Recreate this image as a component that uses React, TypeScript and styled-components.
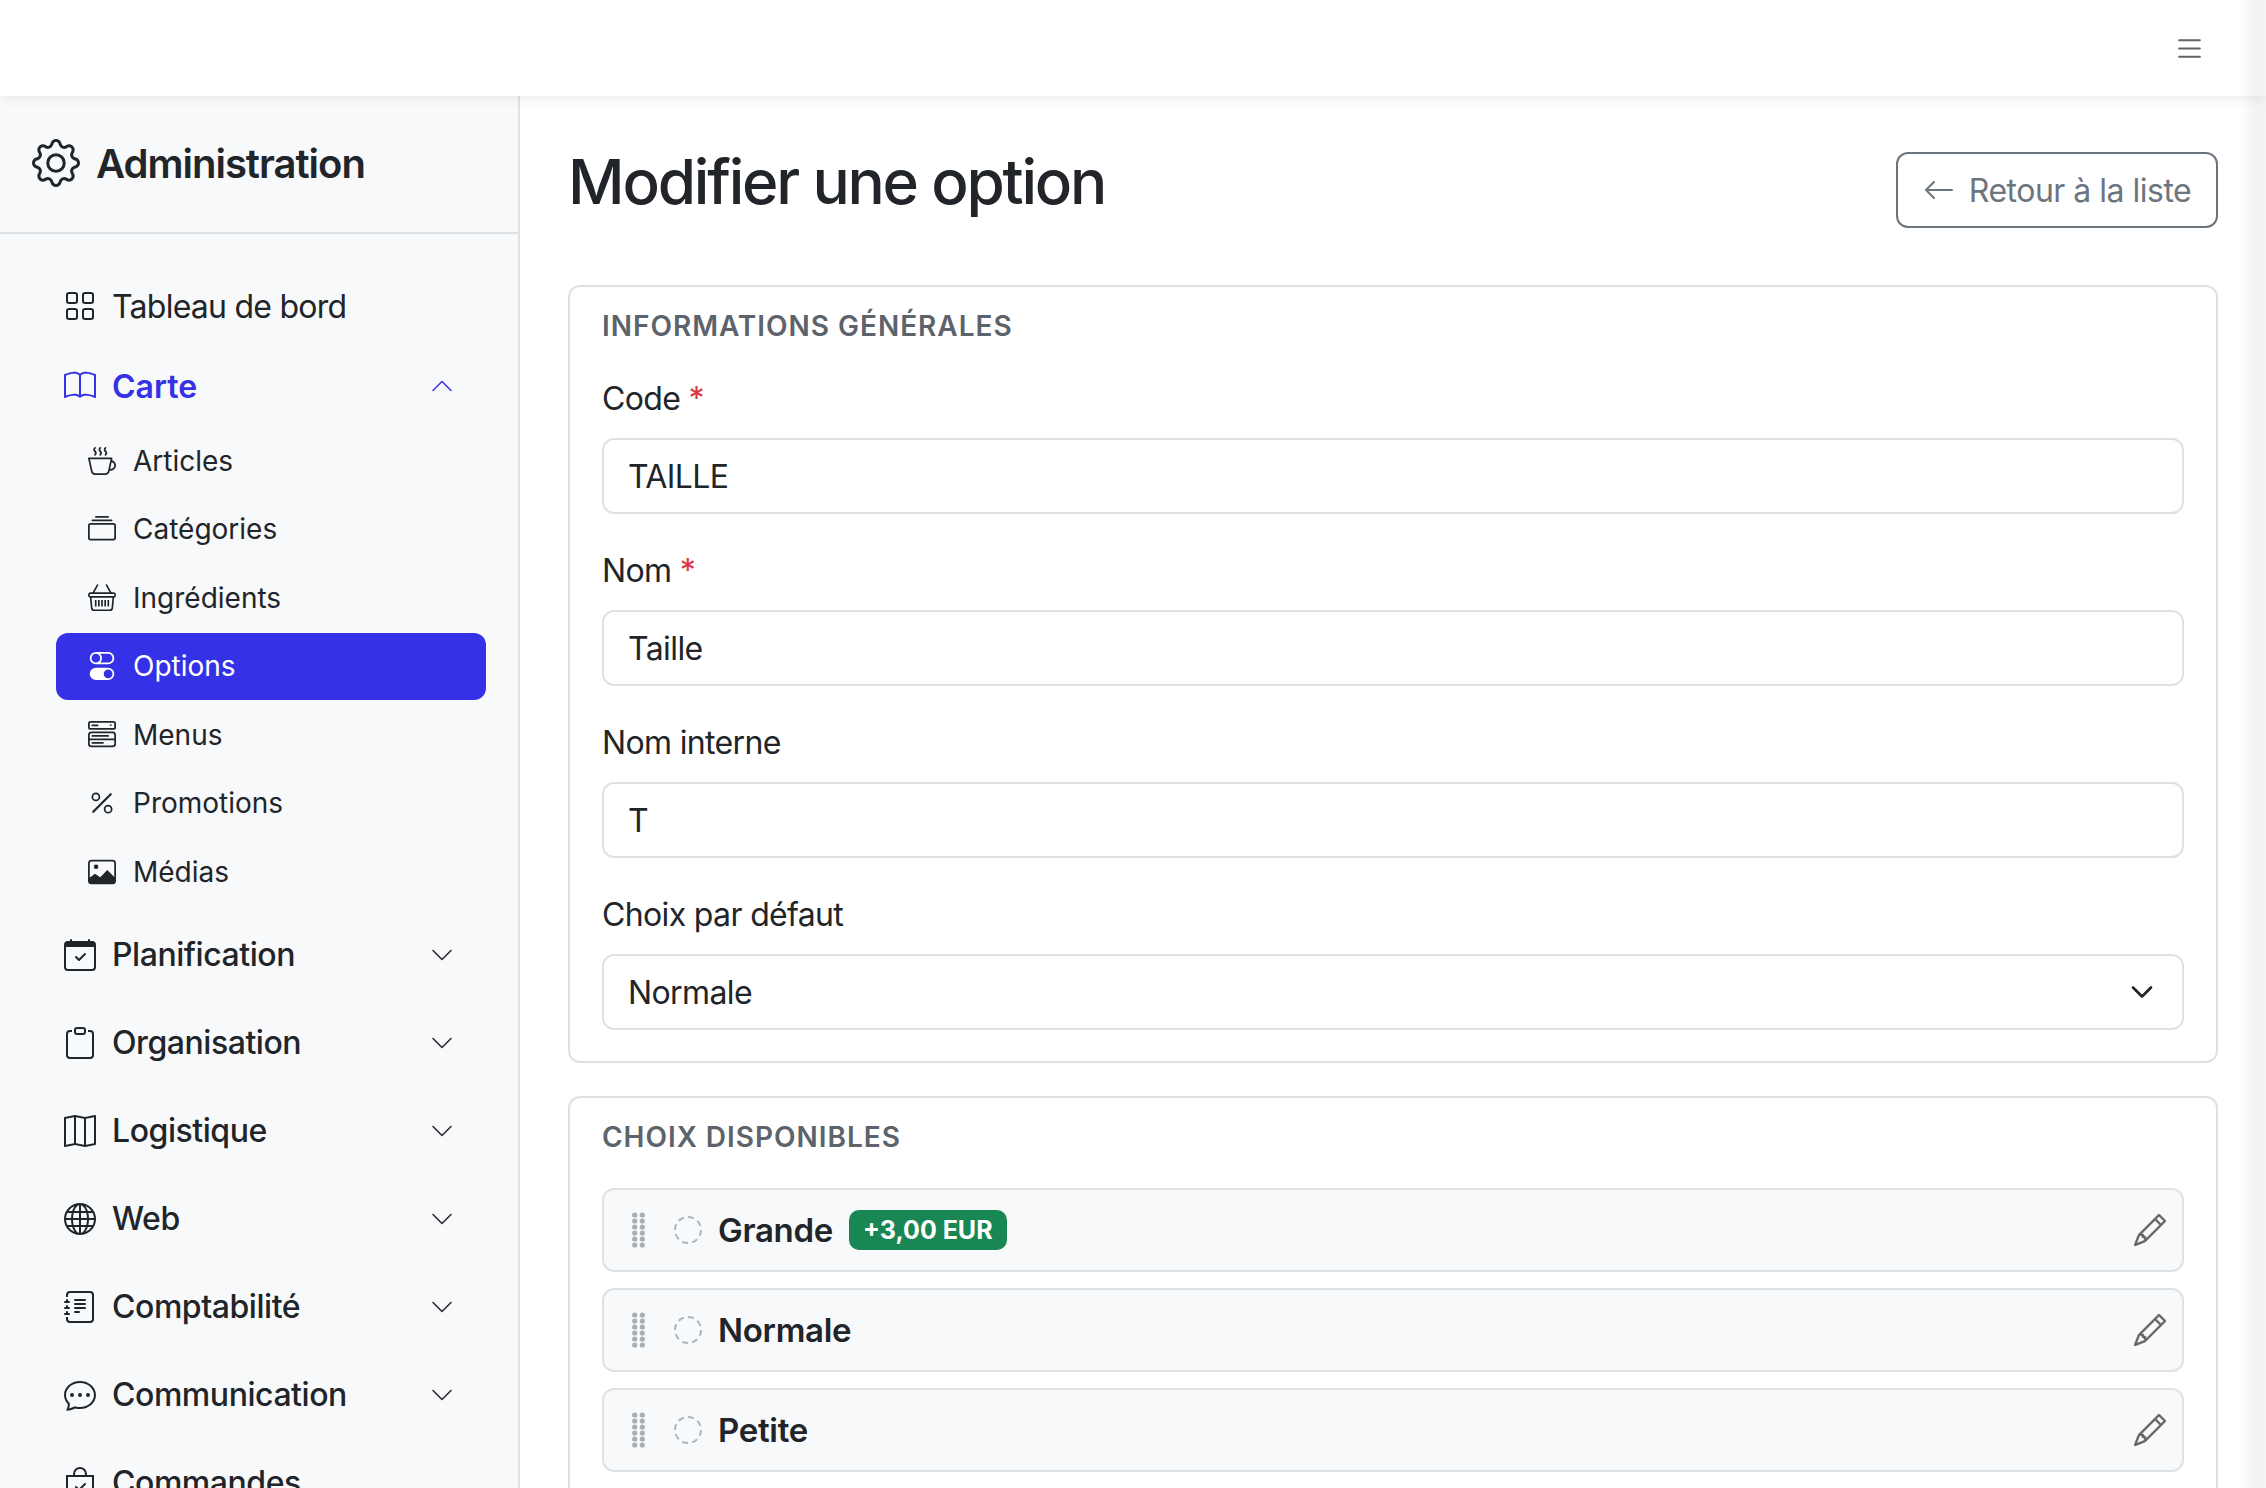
import React from 'react';
import styled, { createGlobalStyle } from 'styled-components';
import {
  BsArrowLeft,
  BsBagCheck,
  BsBook,
  BsCalendarCheck,
  BsChatDots,
  BsChevronDown,
  BsChevronUp,
  BsClipboard,
  BsCollection,
  BsCupHot,
  BsGear,
  BsGlobe,
  BsGrid,
  BsJournalText,
  BsList,
  BsMap,
  BsMenuButtonWide,
  BsPencil,
  BsPercent,
  BsToggles,
} from 'react-icons/bs';

const GlobalStyle = createGlobalStyle`
  html, body {
    margin: 0;
    height: 100%;
    overflow: hidden;
    background: #fff;
    font-family: Inter, "Liberation Sans", sans-serif;
    color: #212529;
  }
  * { box-sizing: border-box; }
`;

const Page = styled.div`
  position: relative;
  display: flex;
  flex-direction: column;
  width: 2266px;
  height: 1488px;
  overflow: hidden;
`;

// macOS overlay scrollbar track, lies over the page edge
const ScrollTrack = styled.div`
  position: absolute;
  top: 0;
  right: 0;
  bottom: 0;
  width: 28px;
  z-index: 2;
  background: linear-gradient(to right, rgba(0, 0, 0, 0), rgba(0, 0, 0, 0.05) 70%, rgba(0, 0, 0, 0.045));
`;

const TopBar = styled.header`
  height: 96px;
  flex-shrink: 0;
  display: flex;
  align-items: center;
  justify-content: flex-end;
  padding-right: 60px;
  background: #fff;
  box-shadow: 0 2px 12px rgba(0, 0, 0, 0.08);
  position: relative;
  z-index: 1;
  color: #5c636a;
  font-size: 33px;
  svg { display: block; }
`;

const Body = styled.div`
  flex: 1;
  min-height: 0;
  display: flex;
`;

const Sidebar = styled.aside`
  width: 520px;
  flex-shrink: 0;
  background: #f8f9fa;
  border-right: 2px solid #dee2e6;
`;

const Brand = styled.div`
  height: 138px;
  display: flex;
  align-items: center;
  gap: 16px;
  padding: 0 0 2px 32px;
  border-bottom: 2px solid #dee2e6;
  font-size: 40px;
  font-weight: 600;
  letter-spacing: -1px;
  svg { font-size: 48px; margin-top: -1px; }
`;

const Nav = styled.nav`
  padding-top: 32px;
`;

const NavItem = styled.div<{ $active?: boolean; $weight?: number; $spacing?: number }>`
  height: 80px;
  display: flex;
  align-items: center;
  gap: 16px;
  padding: 0 64px;
  font-size: 32px;
  font-weight: ${(p) => p.$weight ?? 500};
  letter-spacing: ${(p) => p.$spacing ?? -0.45}px;
  color: ${(p) => (p.$active ? '#3531e6' : '#212529')};
`;

const ParentItem = styled(NavItem)`
  height: 88px;
`;

const NavIcon = styled.span`
  display: flex;
  font-size: 32px;
`;

const NavLabel = styled.span`
  flex: 1;
`;

const Chevron = styled.span`
  display: flex;
  font-size: 24px;
`;

const SubList = styled.div`
  margin: 1px 32px 5px 56px;
`;

const SubItem = styled.div<{ $active?: boolean }>`
  height: 67px;
  margin-bottom: 1.6px;
  display: flex;
  align-items: center;
  gap: 17px;
  padding-left: 32px;
  border-radius: 12px;
  font-size: 28px;
  background: ${(p) => (p.$active ? '#3531e6' : 'transparent')};
  color: ${(p) => (p.$active ? '#fff' : '#212529')};
  svg { font-size: 28px; flex-shrink: 0; }
`;

const DrawnIcon = styled.svg`
  width: 1em;
  height: 1em;
`;

const Main = styled.main`
  flex: 1;
  min-width: 0;
  padding: 48px 48px 0 48px;
  background: #fff;
`;

const PageHead = styled.div`
  display: flex;
  justify-content: space-between;
  align-items: flex-start;
  margin-bottom: 57px;
`;

const Title = styled.h1`
  margin: 0;
  font-size: 62px;
  line-height: 76px;
  font-weight: 500;
  letter-spacing: -2.2px;
`;

const BackButton = styled.button`
  margin-top: 8px;
  width: 322px;
  height: 76px;
  display: flex;
  align-items: center;
  justify-content: center;
  gap: 14px;
  background: #fff;
  border: 2px solid #6c757d;
  border-radius: 12px;
  color: #6c757d;
  font-family: inherit;
  font-size: 32px;
  letter-spacing: -0.5px;
  svg { font-size: 32px; }
`;

const Card = styled.section`
  padding: 22px 32px 31px;
  margin-bottom: 33px;
  border: 2px solid #e0e0e0;
  border-radius: 12px;
  background: #fff;
`;

const CardTitle = styled.h2<{ $gap: number }>`
  margin: 0 0 ${(p) => p.$gap}px;
  font-size: 28px;
  line-height: 34px;
  font-weight: 600;
  letter-spacing: 0.98px;
  text-transform: uppercase;
  color: #5c636a;
`;

const Field = styled.div`
  margin-bottom: 38px;
  &:last-child { margin-bottom: 0; }
`;

const Label = styled.label`
  display: block;
  margin-bottom: 20px;
  font-size: 32px;
  line-height: 38px;
  letter-spacing: -0.65px;
`;

const Required = styled.span`
  color: #dc3545;
`;

const TextInput = styled.input`
  display: block;
  width: 100%;
  height: 76px;
  padding: 0 24px;
  border: 2px solid #dee2e6;
  border-radius: 12px;
  background: #fff;
  font-family: inherit;
  font-size: 32px;
  letter-spacing: -0.6px;
  color: #212529;
`;

const SelectWrap = styled.div`
  position: relative;
`;

const SelectBox = styled.select`
  display: block;
  width: 100%;
  height: 76px;
  padding: 0 24px;
  border: 2px solid #dee2e6;
  border-radius: 12px;
  background: #fff;
  appearance: none;
  font-family: inherit;
  font-size: 32px;
  letter-spacing: -0.6px;
  color: #212529;
`;

const SelectChevron = styled.span`
  position: absolute;
  top: 26px;
  right: 30px;
  display: flex;
  font-size: 24px;
  svg { stroke: currentColor; stroke-width: 0.8px; }
`;

const ChoiceList = styled.div`
  display: flex;
  flex-direction: column;
  gap: 16px;
`;

const Choice = styled.div`
  height: 84px;
  display: flex;
  align-items: center;
  padding: 0 16px 0 28px;
  border: 2px solid #dee2e6;
  border-radius: 12px;
  background: #f8f9fa;
`;

const Grip = styled.svg`
  width: 13px;
  height: 36px;
  flex-shrink: 0;
  color: #a8aeb4;
`;

const DashedCircle = styled.span`
  width: 28px;
  height: 28px;
  margin: 0 16px 0 29px;
  flex-shrink: 0;
  border: 2px dashed #adb5bd;
  border-radius: 50%;
`;

const ChoiceName = styled.span`
  font-size: 33px;
  font-weight: 600;
  letter-spacing: -0.3px;
`;

const Badge = styled.span`
  height: 40px;
  margin-left: 16px;
  padding: 0 14px;
  display: flex;
  align-items: center;
  border-radius: 10px;
  background: #198754;
  color: #fff;
  font-size: 25px;
  font-weight: 700;
`;

const EditButton = styled.span`
  margin-left: auto;
  display: flex;
  font-size: 32px;
  color: #666;
  svg { stroke: currentColor; stroke-width: 0.2px; }
`;

const GripIcon = () => (
  <Grip viewBox="0 0 13 36" fill="currentColor">
    {[3, 9, 15, 21, 27, 33].map((y) => (
      <g key={y}>
        <circle cx="2.7" cy={y} r="2.6" />
        <circle cx="10.3" cy={y} r="2.6" />
      </g>
    ))}
  </Grip>
);

const BasketIcon = () => (
  <DrawnIcon viewBox="0 0 16 16" fill="none" stroke="currentColor" strokeWidth="0.95">
    <path d="M5.4.6 2.9 5.2M10.6.6l2.5 4.6" strokeLinecap="round" />
    <rect x="0.5" y="5.2" width="15" height="2.2" rx="0.9" />
    <path d="M1.5 7.4l.6 6.2a1.6 1.6 0 0 0 1.6 1.4h8.6a1.6 1.6 0 0 0 1.6-1.4l.6-6.2" />
    <path d="M4.4 9.2v3.6M6.2 9.2v3.6M8 9.2v3.6M9.8 9.2v3.6M11.6 9.2v3.6" />
  </DrawnIcon>
);

const MediaIcon = () => (
  <DrawnIcon viewBox="0 0 16 16" fill="currentColor">
    <path
      fillRule="evenodd"
      d="M2 1h12a2 2 0 0 1 2 2v10a2 2 0 0 1-2 2H2a2 2 0 0 1-2-2V3a2 2 0 0 1 2-2m0 1a1 1 0 0 0-1 1v8.2l3-2.2 3 2 4-4.2 4 4V3a1 1 0 0 0-1-1z"
    />
    <circle cx="4.6" cy="5" r="1.3" />
  </DrawnIcon>
);

const subItems = [
  { label: 'Articles', icon: <BsCupHot /> },
  { label: 'Catégories', icon: <BsCollection /> },
  { label: 'Ingrédients', icon: <BasketIcon /> },
  { label: 'Options', icon: <BsToggles />, active: true },
  { label: 'Menus', icon: <BsMenuButtonWide /> },
  { label: 'Promotions', icon: <BsPercent /> },
  { label: 'Médias', icon: <MediaIcon /> },
];

const parents = [
  { label: 'Planification', icon: <BsCalendarCheck />, chevron: true },
  { label: 'Organisation', icon: <BsClipboard />, chevron: true },
  { label: 'Logistique', icon: <BsMap />, chevron: true },
  { label: 'Web', icon: <BsGlobe />, chevron: true },
  { label: 'Comptabilité', icon: <BsJournalText />, chevron: true },
  { label: 'Communication', icon: <BsChatDots />, chevron: true },
  { label: 'Commandes', icon: <BsBagCheck /> },
];

const fields = [
  { label: 'Code', value: 'TAILLE', required: true },
  { label: 'Nom', value: 'Taille', required: true },
  { label: 'Nom interne', value: 'T' },
];

const choices = [
  { name: 'Grande', extra: '+3,00 EUR' },
  { name: 'Normale' },
  { name: 'Petite' },
];

const App: React.FC = () => {
  return (
    <Page>
      <GlobalStyle />
      <TopBar>
        <BsList />
      </TopBar>
      <Body>
        <Sidebar>
          <Brand>
            <BsGear />
            Administration
          </Brand>
          <Nav>
            <NavItem $weight={400} $spacing={-0.75}>
              <NavIcon><BsGrid /></NavIcon>
              <NavLabel>Tableau de bord</NavLabel>
            </NavItem>
            <NavItem $active $weight={600} $spacing={0}>
              <NavIcon><BsBook /></NavIcon>
              <NavLabel>Carte</NavLabel>
              <Chevron><BsChevronUp /></Chevron>
            </NavItem>
            <SubList>
              {subItems.map((item) => (
                <SubItem key={item.label} $active={item.active}>
                  {item.icon}
                  {item.label}
                </SubItem>
              ))}
            </SubList>
            {parents.map((item) => (
              <ParentItem key={item.label}>
                <NavIcon>{item.icon}</NavIcon>
                <NavLabel>{item.label}</NavLabel>
                {item.chevron && <Chevron><BsChevronDown /></Chevron>}
              </ParentItem>
            ))}
          </Nav>
        </Sidebar>
        <Main>
          <PageHead>
            <Title>Modifier une option</Title>
            <BackButton>
              <BsArrowLeft />
              Retour à la liste
            </BackButton>
          </PageHead>

          <Card>
            <CardTitle $gap={37}>Informations générales</CardTitle>
            {fields.map((field) => (
              <Field key={field.label}>
                <Label>
                  {field.label} {field.required && <Required>*</Required>}
                </Label>
                <TextInput defaultValue={field.value} />
              </Field>
            ))}
            <Field>
              <Label>Choix par défaut</Label>
              <SelectWrap>
                <SelectBox defaultValue="Normale">
                  <option>Grande</option>
                  <option>Normale</option>
                  <option>Petite</option>
                </SelectBox>
                <SelectChevron><BsChevronDown /></SelectChevron>
              </SelectWrap>
            </Field>
          </Card>

          <Card>
            <CardTitle $gap={34}>Choix disponibles</CardTitle>
            <ChoiceList>
              {choices.map((choice) => (
                <Choice key={choice.name}>
                  <GripIcon />
                  <DashedCircle />
                  <ChoiceName>{choice.name}</ChoiceName>
                  {choice.extra && <Badge>{choice.extra}</Badge>}
                  <EditButton><BsPencil /></EditButton>
                </Choice>
              ))}
            </ChoiceList>
          </Card>
        </Main>
      </Body>
      <ScrollTrack />
    </Page>
  );
};

export default App;
